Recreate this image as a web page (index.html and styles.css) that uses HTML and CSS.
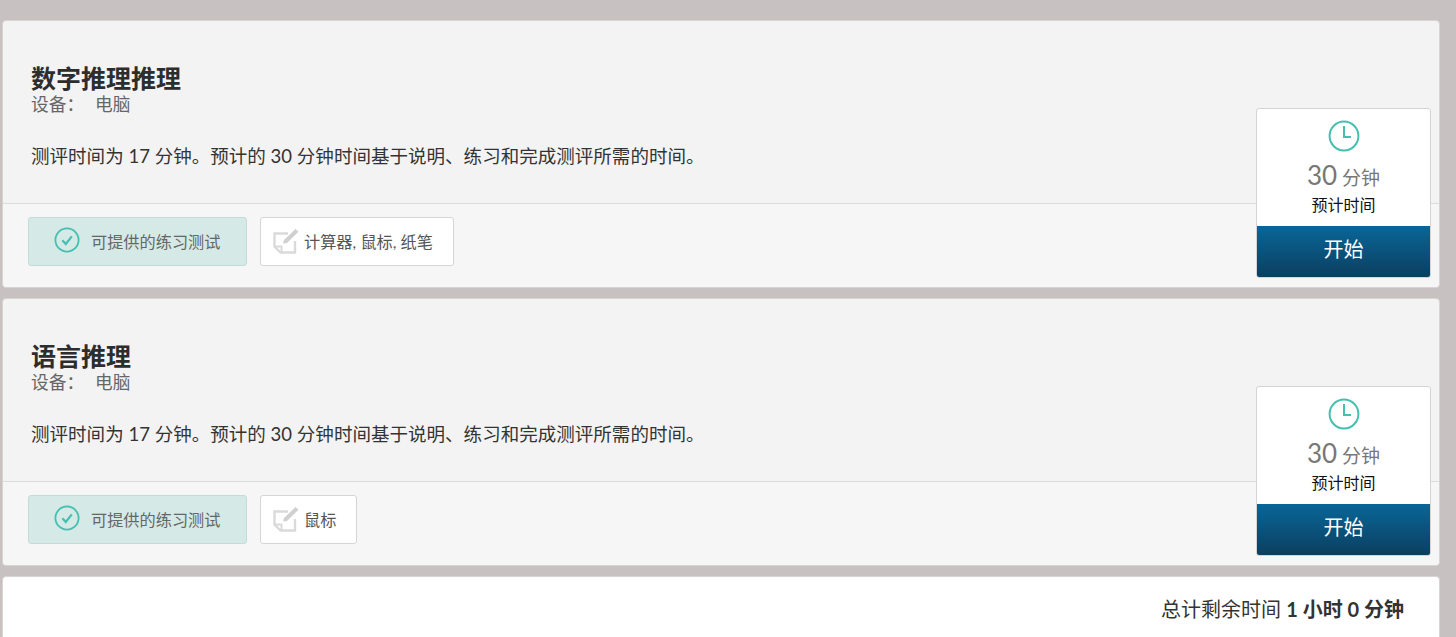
FILE: index.html
```html
<!DOCTYPE html>
<html lang="zh-CN">
<head>
<meta charset="utf-8">
<title>测评</title>
<link rel="stylesheet" href="styles.css">
</head>
<body>
<main class="page">
  <section class="card">
    <div class="body">
      <h2 class="title">数字推理推理</h2>
      <p class="device"><span class="device-label">设备：</span><span>电脑</span></p>
      <p class="desc">测评时间为 17 分钟。预计的 30 分钟时间基于说明、练习和完成测评所需的时间。</p>
    </div>
    <div class="foot">
      <div class="tag tag-practice">
        <svg class="ico-check" viewBox="0 0 26 26"><circle cx="13" cy="13" r="11.6" fill="none" stroke="#45bfb0" stroke-width="1.8"/><path d="M8.4 13.2l3.4 3.8 6-7.6" fill="none" stroke="#45bfb0" stroke-width="2.2"/></svg>
        <span>可提供的练习测试</span>
      </div>
      <div class="tag tag-tools">
        <svg class="ico-edit" viewBox="0 0 26 26"><path d="M15 5.5H1.5v13l6 6h14.5V13" fill="none" stroke="#dadada" stroke-width="2.4"/><path d="M2 18.5h6.5V24" fill="none" stroke="#dadada" stroke-width="2"/><path d="M10 15.5l1-3.5L22.5 1l3 2.8L14 15z" fill="#d0d0d0"/></svg>
        <span>计算器, 鼠标, 纸笔</span>
      </div>
    </div>
    <aside class="box">
      <div class="box-info">
        <svg class="ico-clock" viewBox="0 0 32 32"><circle cx="16" cy="16" r="14.4" fill="none" stroke="#45bfb0" stroke-width="2"/><path d="M16 6v11h7" fill="none" stroke="#45bfb0" stroke-width="2"/></svg>
        <div class="mins"><span class="num">30</span> 分钟</div>
        <div class="est">预计时间</div>
      </div>
      <div class="start">开始</div>
    </aside>
  </section>
  <section class="card">
    <div class="body">
      <h2 class="title">语言推理</h2>
      <p class="device"><span class="device-label">设备：</span><span>电脑</span></p>
      <p class="desc">测评时间为 17 分钟。预计的 30 分钟时间基于说明、练习和完成测评所需的时间。</p>
    </div>
    <div class="foot">
      <div class="tag tag-practice">
        <svg class="ico-check" viewBox="0 0 26 26"><circle cx="13" cy="13" r="11.6" fill="none" stroke="#45bfb0" stroke-width="1.8"/><path d="M8.4 13.2l3.4 3.8 6-7.6" fill="none" stroke="#45bfb0" stroke-width="2.2"/></svg>
        <span>可提供的练习测试</span>
      </div>
      <div class="tag tag-tools">
        <svg class="ico-edit" viewBox="0 0 26 26"><path d="M15 5.5H1.5v13l6 6h14.5V13" fill="none" stroke="#dadada" stroke-width="2.4"/><path d="M2 18.5h6.5V24" fill="none" stroke="#dadada" stroke-width="2"/><path d="M10 15.5l1-3.5L22.5 1l3 2.8L14 15z" fill="#d0d0d0"/></svg>
        <span>鼠标</span>
      </div>
    </div>
    <aside class="box">
      <div class="box-info">
        <svg class="ico-clock" viewBox="0 0 32 32"><circle cx="16" cy="16" r="14.4" fill="none" stroke="#45bfb0" stroke-width="2"/><path d="M16 6v11h7" fill="none" stroke="#45bfb0" stroke-width="2"/></svg>
        <div class="mins"><span class="num">30</span> 分钟</div>
        <div class="est">预计时间</div>
      </div>
      <div class="start">开始</div>
    </aside>
  </section>
  <section class="total">总计剩余时间 <strong>1 小时 0 分钟</strong></section>
</main>
</body>
</html>
```
FILE: styles.css
```css
* { box-sizing: border-box; }
html, body { height: 100%; }
body {
  margin: 0;
  background: #c8c1c1;
  font-family: Lato, "Noto Sans CJK SC", sans-serif;
  color: #333;
  overflow: hidden;
}
.page {
  display: flex;
  flex-direction: column;
  gap: 10px;
  padding: 20px 16px 0 2px;
}
.card {
  position: relative;
  height: 268px;
  background: #f3f3f3;
  border-radius: 4px;
  border: 1px solid #d8d4d4;
  display: flex;
  flex-direction: column;
  overflow: visible;
}
.body {
  height: 183px;
  padding: 42px 28px 0;
  border-bottom: 1px solid #dcdcdc;
}
.title {
  margin: 0;
  font-size: 25px;
  line-height: 30px;
  font-weight: 700;
  color: #2d2d2d;
}
.device {
  margin: 0;
  padding-top: 1px;
  display: flex;
  font-size: 17.7px;
  line-height: 22px;
  color: #666;
}
.device-label { width: 64px; }
.desc {
  margin: 27px 0 0;
  font-size: 18.55px;
  line-height: 26px;
  color: #333;
}
.foot {
  flex: 1;
  display: flex;
  gap: 13px;
  padding: 13px 25px 0;
  background: #f6f6f6;
  border-radius: 0 0 4px 4px;
  align-items: flex-start;
}
.tag {
  height: 49px;
  display: flex;
  align-items: center;
  border-radius: 3px;
  font-size: 16.2px;
  color: #555;
}
.tag span { padding-bottom: 2px; }
.tag-practice {
  width: 219px;
  padding-left: 25px;
  gap: 11px;
  background: #d5e9e6;
  border: 1px solid #c5dbd8;
  color: #666;
}
.tag-tools {
  padding: 0 20px 0 12px;
  gap: 5px;
  background: #fff;
  border: 1px solid #d6d6d6;
}
.ico-check { width: 26px; height: 26px; margin-top: -4px; }
.ico-edit { width: 26px; height: 26px; margin-top: -2px; }
.box {
  position: absolute;
  right: 8px;
  bottom: 9px;
  width: 175px;
  height: 170px;
  display: flex;
  flex-direction: column;
  background: #fff;
  border: 1px solid #d4d4d4;
  border-radius: 3px;
  overflow: hidden;
}
.box-info {
  flex: 1;
  display: flex;
  flex-direction: column;
  align-items: center;
  padding-top: 11px;
}
.ico-clock { width: 32px; height: 32px; }
.mins {
  margin-top: 7px;
  font-size: 19px;
  line-height: 32px;
  color: #777;
}
.num { font-size: 26px; }
.est {
  font-size: 16px;
  line-height: 22px;
  color: #111;
}
.start {
  height: 51px;
  flex: none;
  display: flex;
  align-items: center;
  justify-content: center;
  padding-bottom: 7px;
  background: linear-gradient(#096698, #0b3f60);
  color: #fff;
  font-size: 20px;
}
.total {
  height: 80px;
  background: #fff;
  border-radius: 4px;
  border: 1px solid #d8d4d4;
  padding: 19px 35px 0 0;
  text-align: right;
  font-size: 20px;
  line-height: 26px;
  color: #333;
}
.total strong { font-weight: 700; }
```
